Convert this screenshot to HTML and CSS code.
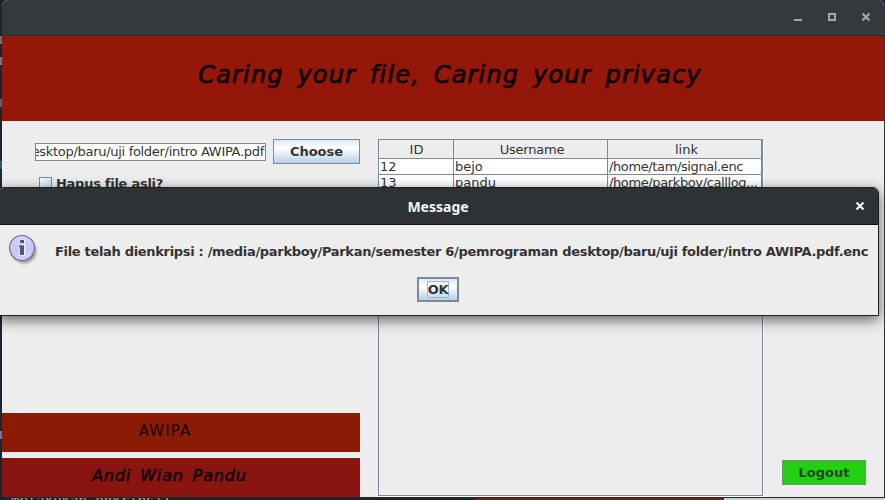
FILE: index.html
```html
<!DOCTYPE html>
<html lang="id">
<head>
<meta charset="utf-8">
<title>AWIPA</title>
<link rel="stylesheet" href="styles.css">
</head>
<body>
<div class="backdrop">
  <div class="edge"><i class="e1"></i><i class="e2"></i><i class="e3"></i><i class="e4"></i><i class="e5"></i></div>
  <div class="strip"><span class="console">melakukan enkripsi!</span><span class="strip-red"></span><span class="strip-light"></span></div>
</div>
<main class="window">
  <header class="titlebar">
    <svg class="controls" width="80" height="12" viewBox="0 0 80 12" fill="none" stroke="#a3a7a8" stroke-width="2">
      <path d="M0 9h8"/><path d="M35 3h6v6h-6z"/><path d="M68.500 2.500l7 7M75.500 2.500l-7 7" stroke-width="2.200"/>
    </svg>
  </header>
  <div class="banner"><h1 class="slogan">Caring your file, Caring your privacy</h1></div>
  <div class="content">
    <section class="left">
      <div class="file-row">
        <div class="path"><span>esktop/baru/uji folder/intro AWIPA.pdf</span></div>
        <button class="btn choose">Choose</button>
      </div>
      <label class="check"><span class="box"></span><span class="check-text">Hapus file asli?</span></label>
      <div class="brand"><span class="brand-text">AWIPA</span></div>
      <div class="author"><span class="author-text">Andi Wian Pandu</span></div>
    </section>
    <section class="table">
      <div class="row head"><span>ID</span><span class="username">Username</span><span class="last">link</span></div>
      <div class="row"><span class="num">12</span><span>bejo</span><span class="link">/home/tam/signal.enc</span></div>
      <div class="row"><span class="num">13</span><span>pandu</span><span class="link">/home/parkboy/calllog...</span></div>
    </section>
    <button class="logout">Logout</button>
  </div>
</main>
<div class="dialog">
  <header class="dialog-title">
    <span class="dialog-name">Message</span>
    <svg class="dialog-close" width="10" height="10" viewBox="0 0 10 10" stroke="#f2f2f2" stroke-width="2.200"><path d="M1.500 1.500l7 7M8.500 1.500l-7 7"/></svg>
  </header>
  <div class="message">
    <svg class="info" width="32" height="34" viewBox="0 0 32 34">
      <defs>
        <linearGradient id="g" x1="0" y1="0" x2="0" y2="1"><stop offset="0" stop-color="#d4d4f4"/><stop offset=".5" stop-color="#c6c6fa"/><stop offset="1" stop-color="#cecefd"/></linearGradient>
        <filter id="s" x="-30%" y="-30%" width="160%" height="160%"><feGaussianBlur stdDeviation="1.300"/></filter>
      </defs>
      <circle cx="16" cy="17" r="12.500" fill="#777" opacity=".65" filter="url(#s)"/>
      <circle cx="14" cy="14" r="12.500" fill="url(#g)" stroke="#66668c" stroke-width="1.100"/>
      <path d="M12 6h4.500v3.500H12zM12 11h4.500v10.500H12zM10.500 11H13v2h-2.500z" fill="#fff" stroke="#f4f4ff" stroke-width="1.200"/>
      <path d="M12 6h4v3.200h-4zM10.800 11.200H16V21h-4v-7.800h-1.200z" fill="#56567c"/>
    </svg>
    <span class="message-text">File telah dienkripsi : /media/parkboy/Parkan/semester 6/pemrograman desktop/baru/uji folder/intro AWIPA.pdf.enc</span>
  </div>
  <div class="actions"><button class="btn ok"><span>OK</span></button></div>
</div>
</body>
</html>
```
FILE: styles.css
```css
* { box-sizing: border-box; }
html, body { margin: 0; width: 885px; height: 500px; overflow: hidden; }
body { position: relative; background: #20252b; color: #333; font: 13px/16px "DejaVu Sans", sans-serif; }
button { margin: 0; padding: 0; color: #333; font: bold 13px/16px "DejaVu Sans", sans-serif; }
.backdrop { height: 500px; display: flex; flex-direction: column; justify-content: space-between; }
.edge { width: 2px; display: flex; flex-direction: column; padding-top: 36px; }
.edge i { height: 8px; margin-bottom: 13px; background: #68707a; }
.edge .e2 { background: #77708b; margin-bottom: 34px; }
.edge .e3 { background: #59627a; margin-bottom: 54px; }
.edge .e4 { background: #3c536d; margin-bottom: 262px; }
.edge .e5 { background: #607da0; }
.strip { height: 3px; display: flex; overflow: hidden; background: #1b252a; }
.console { width: 476px; padding-left: 11px; margin-top: -5px; color: #a5a39b; font: 14px/16px "DejaVu Sans Mono", monospace; }
.strip-red { width: 248px; background: #7b1c19; }
.strip-light { flex: 1; background: #cfd2cb; }

.window { position: absolute; left: 2px; top: 0; width: 883px; height: 498px; background: #ededed; border-right: 1px solid #30373b; border-bottom: 1px solid #22292d; border-radius: 6px 6px 0 0; overflow: hidden; }
.titlebar { height: 36px; background: #34393c; border-bottom: 1px solid #252b2d; display: flex; justify-content: flex-end; padding: 11px 10px 0 0; }
.banner { height: 85px; background: #951709; text-align: center; padding-top: 24px; }
.slogan { margin: 0 0 0 14px; color: #0c0000; font: italic normal 24px/30px "DejaVu Sans", sans-serif; letter-spacing: 1.17px; word-spacing: 5px; -webkit-text-stroke: .7px #0c0000; white-space: nowrap; }
.content { display: grid; grid-template-columns: 358px 385px 1fr; column-gap: 18px; height: 376px; }
.left { display: flex; flex-direction: column; }
.file-row { display: flex; align-items: center; margin: 18px 0 0 33px; }
.path { width: 231px; height: 18px; border: 1px solid #7a8a99; background: #fff; display: flex; justify-content: flex-end; overflow: hidden; white-space: nowrap; padding: 0 1px; }
.path span { line-height: 16px; letter-spacing: -.3px; }
.btn { border: 1px solid #7a8a99; background: linear-gradient(#dce8f2, #fff 35%, #eef4f9 50%, #b8cfe5); }
.choose { width: 87px; height: 25px; margin-left: 7px; }
.check { display: flex; align-items: center; margin: 10px 0 0 37px; height: 18px; }
.box { width: 13px; height: 13px; border: 1px solid #7a8a99; background: linear-gradient(135deg, #fff, #c7d9e9); }
.check-text { font-weight: bold; margin: 2px 0 0 4px; letter-spacing: -.27px; }
.brand { margin-top: auto; height: 39px; background: #8b1b05; text-align: center; padding: 10px 32px 0 0; color: #110300; font-size: 15px; line-height: 17px; letter-spacing: 1.1px; }
.author { margin-top: 6px; height: 39px; background: #8a1410; text-align: center; padding: 9px 23px 0 0; color: #0c0000; font-size: 16px; line-height: 18px; font-style: italic; -webkit-text-stroke: .5px #0c0000; }
.author-text { letter-spacing: .85px; word-spacing: 3px; }
.table { margin-top: 18px; height: 357px; border: 1px solid #7a8a99; box-shadow: 1px 1px #fff; }
.row { display: grid; grid-template-columns: 75px 154px 154px; height: 16px; background: #fff; }
.row span { border-right: 1px solid #7a8a99; border-bottom: 1px solid #7a8a99; padding-left: 1px; line-height: 16px; overflow: hidden; white-space: nowrap; }
.row .link { letter-spacing: -.38px; }
.head { background: #ededed; height: 19px; }
.head span { text-align: center; line-height: 20px; }
.head .last { padding-left: 4px; }
.head .username { letter-spacing: -.2px; padding-left: 3px; }
.logout { width: 84px; height: 25px; margin: 339px 0 0 1px; background: #22cf13; border: 1px solid #6a9a6c; color: #24451e; }

.dialog { position: absolute; left: -2px; top: 187px; width: 881px; height: 129px; background: #ededed; border: 1px solid #1c2022; border-radius: 6px 6px 0 0; box-shadow: 0 4px 14px rgba(0,0,0,.6); }
.dialog-title { height: 37px; background: #2d3234; border-bottom: 1px solid #0e1011; border-radius: 5px 5px 0 0; display: flex; align-items: center; justify-content: center; position: relative; color: #f2f2f2; }
.dialog-name { font: bold 14px/18px "Noto Sans", sans-serif; margin: 2px 1px 0 0; }
.dialog-close { position: absolute; right: 13px; top: 13px; }
.message { display: flex; height: 52px; padding: 9px 0 0 9px; }
.info { flex: none; }
.message-text { margin: 10px 0 0 15px; font-weight: bold; letter-spacing: -.316px; white-space: nowrap; }
.actions { display: flex; justify-content: center; padding-right: 1px; }
.ok { width: 42px; height: 25px; border-width: 2px; display: flex; align-items: center; justify-content: center; }
.ok span { width: 22px; height: 17px; line-height: 16px; border: 1px solid #a3b8cc; display: flex; justify-content: center; letter-spacing: -.3px; }
```
